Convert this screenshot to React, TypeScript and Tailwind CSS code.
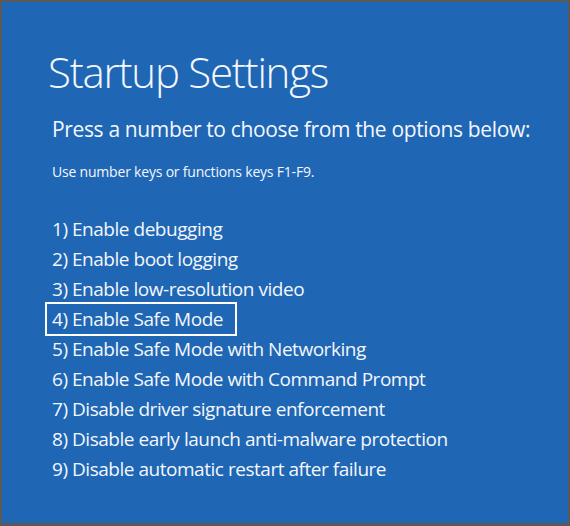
export default function App() {
  const items = [
    "1) Enable debugging",
    "2) Enable boot logging",
    "3) Enable low-resolution video",
    "4) Enable Safe Mode",
    "5) Enable Safe Mode with Networking",
    "6) Enable Safe Mode with Command Prompt",
    "7) Disable driver signature enforcement",
    "8) Disable early launch anti-malware protection",
    "9) Disable automatic restart after failure",
  ];
  return (
    <div
      className="w-[570px] h-[526px] bg-[#1f66b5] border-2 border-b-[3px] border-[#595959] text-[#f4f7fb] overflow-hidden"
      style={{ fontFamily: '"Open Sans", "Noto Sans", sans-serif' }}
    >
      <div className="pl-[46px] pt-[42px] flex flex-col">
        <h1 className="text-[42px] leading-[56px] font-light tracking-[-1.25px]">Startup Settings</h1>
        <p className="pl-[4px] mt-[17px] text-[21px] leading-[24px] tracking-[-0.35px]">Press a number to choose from the options below:</p>
        <p className="pl-[4px] mt-[23px] text-[14px] leading-[16px] tracking-[-0.2px]">Use number keys or functions keys F1-F9.</p>
        <ul className="mt-[34px] flex flex-col">
          {items.map((t, i) => (
            <li key={i} className="h-[30px] flex items-center text-[19px] tracking-[-0.47px]">
              {i === 3 ? (
                <span className="-ml-[3px] h-[34px] w-[192px] shrink-0 border-2 border-white flex items-center pl-[5px] whitespace-nowrap">{t}</span>
              ) : (
                <span className="pl-[4px] whitespace-nowrap">{t}</span>
              )}
            </li>
          ))}
        </ul>
      </div>
    </div>
  );
}
